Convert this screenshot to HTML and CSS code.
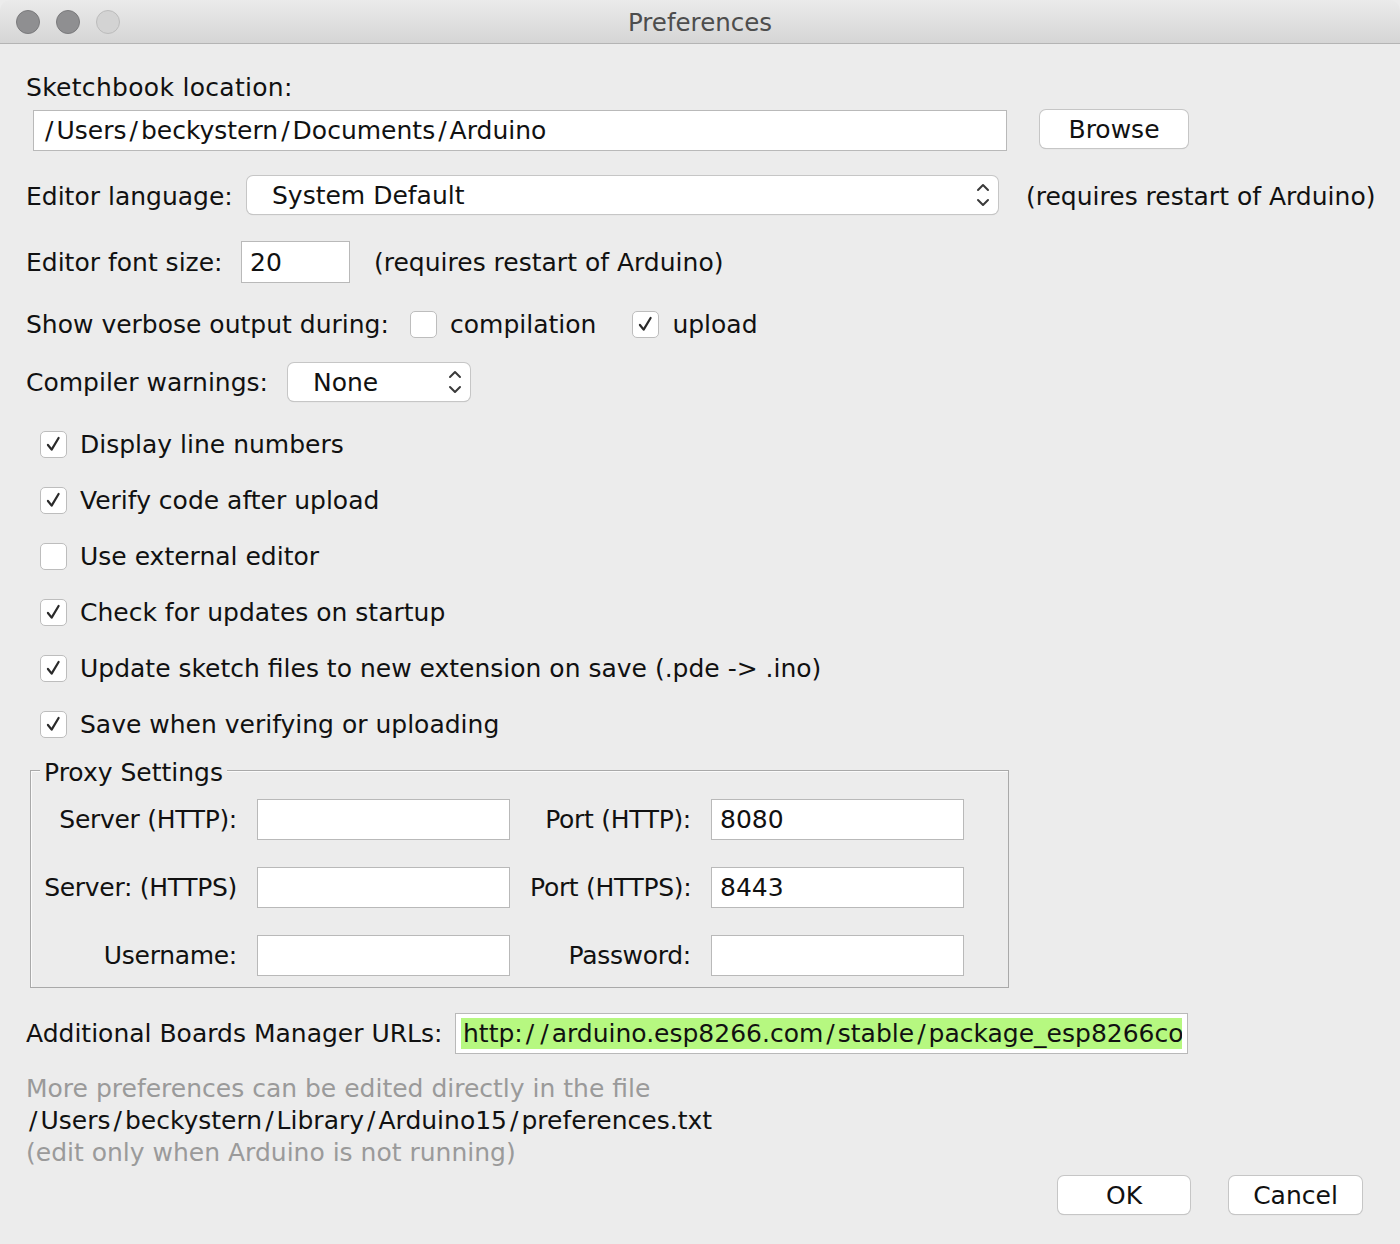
FILE: index.html
```html
<!DOCTYPE html>
<html>
<head>
<meta charset="utf-8">
<link rel="stylesheet" href="styles.css">
</head>
<body>
<div class="window">
  <div class="titlebar">
    <div class="lights">
      <span class="light dark"></span>
      <span class="light dark"></span>
      <span class="light pale"></span>
    </div>
    <div class="title">Preferences</div>
  </div>
  <div class="content">
    <div class="row r1">Sketchbook location:</div>
    <div class="row r2">
      <div class="field path"><span class="sl">/</span>Users<span class="sl">/</span>beckystern<span class="sl">/</span>Documents<span class="sl">/</span>Arduino</div>
      <div class="button browse">Browse</div>
    </div>
    <div class="row r3">
      <span class="label lab-lang">Editor language:</span>
      <div class="select lang"><span>System Default</span>
        <svg class="arrows" width="14" height="30" viewBox="0 0 14 30"><path d="M2 10 L7 5 L12 10 M2 20 L7 25 L12 20" fill="none" stroke="#3a3a3a" stroke-width="2" stroke-linecap="round" stroke-linejoin="round"/></svg>
      </div>
      <span class="note lang-note">(requires restart of Arduino)</span>
    </div>
    <div class="row r4">
      <span class="label lab-size">Editor font size:</span>
      <div class="field size">20</div>
      <span class="note size-note">(requires restart of Arduino)</span>
    </div>
    <div class="row r5">
      <span class="label lab-verbose">Show verbose output during:</span>
      <span class="check"></span><span class="cb-text comp-text">compilation</span>
      <span class="check checked"><svg viewBox="0 0 27 27"><path d="M7.5 14 L11.5 19 L19 6.5" fill="none" stroke="#2a2a2a" stroke-width="2.4" stroke-linecap="round" stroke-linejoin="round"/></svg></span><span class="cb-text">upload</span>
    </div>
    <div class="row r6">
      <span class="label lab-warn">Compiler warnings:</span>
      <div class="select warn"><span>None</span>
        <svg class="arrows" width="14" height="30" viewBox="0 0 14 30"><path d="M2 10 L7 5 L12 10 M2 20 L7 25 L12 20" fill="none" stroke="#3a3a3a" stroke-width="2" stroke-linecap="round" stroke-linejoin="round"/></svg>
      </div>
    </div>
    <div class="checks">
      <div class="crow"><span class="check checked"><svg viewBox="0 0 27 27"><path d="M7.5 14 L11.5 19 L19 6.5" fill="none" stroke="#2a2a2a" stroke-width="2.4" stroke-linecap="round" stroke-linejoin="round"/></svg></span><span class="cb-text">Display line numbers</span></div>
      <div class="crow"><span class="check checked"><svg viewBox="0 0 27 27"><path d="M7.5 14 L11.5 19 L19 6.5" fill="none" stroke="#2a2a2a" stroke-width="2.4" stroke-linecap="round" stroke-linejoin="round"/></svg></span><span class="cb-text">Verify code after upload</span></div>
      <div class="crow"><span class="check"></span><span class="cb-text">Use external editor</span></div>
      <div class="crow"><span class="check checked"><svg viewBox="0 0 27 27"><path d="M7.5 14 L11.5 19 L19 6.5" fill="none" stroke="#2a2a2a" stroke-width="2.4" stroke-linecap="round" stroke-linejoin="round"/></svg></span><span class="cb-text">Check for updates on startup</span></div>
      <div class="crow"><span class="check checked"><svg viewBox="0 0 27 27"><path d="M7.5 14 L11.5 19 L19 6.5" fill="none" stroke="#2a2a2a" stroke-width="2.4" stroke-linecap="round" stroke-linejoin="round"/></svg></span><span class="cb-text">Update sketch files to new extension on save (.pde -&gt; .ino)</span></div>
      <div class="crow"><span class="check checked"><svg viewBox="0 0 27 27"><path d="M7.5 14 L11.5 19 L19 6.5" fill="none" stroke="#2a2a2a" stroke-width="2.4" stroke-linecap="round" stroke-linejoin="round"/></svg></span><span class="cb-text">Save when verifying or uploading</span></div>
    </div>
    <div class="group">
      <span class="legend">Proxy Settings</span>
      <div class="proxy-grid">
        <span class="plabel">Server (HTTP):</span><div class="field pf"></div>
        <span class="plabel">Port (HTTP):</span><div class="field pf">8080</div>
        <span class="plabel">Server: (HTTPS)</span><div class="field pf"></div>
        <span class="plabel">Port (HTTPS):</span><div class="field pf">8443</div>
        <span class="plabel">Username:</span><div class="field pf"></div>
        <span class="plabel">Password:</span><div class="field pf"></div>
      </div>
    </div>
    <div class="row url-row">
      <span class="label lab-url">Additional Boards Manager URLs:</span>
      <div class="field url"><span class="hl">http:<span class="sl">/</span><span class="sl">/</span>arduino.esp8266.com<span class="sl">/</span>stable<span class="sl">/</span>package_esp8266com_index.json</span></div>
    </div>
    <div class="info">
      <div class="gray">More preferences can be edited directly in the file</div>
      <div><span class="sl">/</span>Users<span class="sl">/</span>beckystern<span class="sl">/</span>Library<span class="sl">/</span>Arduino15<span class="sl">/</span>preferences.txt</div>
      <div class="gray">(edit only when Arduino is not running)</div>
    </div>
    <div class="actions">
      <div class="button ok">OK</div>
      <div class="button cancel">Cancel</div>
    </div>
  </div>
</div>
</body>
</html>
```
FILE: styles.css
```css
html, body {
  margin: 0;
  padding: 0;
  background: #ececec;
}
body {
  width: 1400px;
  height: 1244px;
  overflow: hidden;
  font-family: "DejaVu Sans", "Liberation Sans", sans-serif;
  font-size: 25px;
  color: #111;
}
.window {
  width: 1400px;
  height: 1244px;
  background: #ececec;
}
.titlebar {
  height: 43px;
  border-bottom: 1px solid #b4b4b4;
  background: linear-gradient(#ebebeb, #d5d5d5);
  display: flex;
  align-items: center;
  border-radius: 10px 10px 0 0;
}
.lights {
  display: flex;
  gap: 16px;
  padding-left: 16px;
}
.light {
  width: 24px;
  height: 24px;
  border-radius: 50%;
  box-sizing: border-box;
}
.light.dark {
  background: #8f8f91;
  border: 1px solid #7a7a7c;
}
.light.pale {
  background: #d3d3d3;
  border: 1px solid #bcbcbc;
}
.title {
  flex: 1;
  text-align: center;
  margin-right: 120px;
  color: #4d4d4d;
  font-size: 24.5px;
  padding-top: 2px;
}
.content {
  padding: 22px 0 0 26px;
}
.sl {
  margin: 0 3px;
}
.row {
  display: flex;
  align-items: center;
  height: 44px;
}
.r1 {
  height: 42px;
  letter-spacing: 0.3px;
}
.r3 { margin-top: 22px; }
.r4 { margin-top: 22px; }
.r5 { margin-top: 18px; }
.r6 { margin-top: 14px; }
.label {
  flex: none;
  white-space: nowrap;
}
.lab-lang { width: 221px; }
.lab-size { width: 215px; }
.lab-verbose { width: 384px; }
.lab-warn { width: 262px; }
.lab-url { width: 429px; }
.field {
  background: #fff;
  border: 1px solid #b9b9b9;
  box-sizing: border-box;
  height: 41px;
  display: flex;
  align-items: center;
  padding-left: 8px;
  white-space: nowrap;
  overflow: hidden;
}
.path {
  margin-left: 7px;
  width: 974px;
}
.button {
  background: #fff;
  border-radius: 6px;
  box-shadow: 0 0 0 1px #c6c6c6, 0 1px 1px rgba(0,0,0,0.2);
  height: 38px;
  display: flex;
  align-items: center;
  justify-content: center;
  box-sizing: border-box;
}
.browse {
  margin-left: 33px;
  width: 148px;
  margin-top: -2px;
}
.select {
  background: #fff;
  border-radius: 6px;
  box-shadow: 0 0 0 1px #c6c6c6, 0 1px 1px rgba(0,0,0,0.2);
  height: 38px;
  display: flex;
  align-items: center;
  justify-content: space-between;
  box-sizing: border-box;
  padding: 0 8px 0 25px;
}
.lang {
  width: 751px;
  margin-top: -2px;
}
.lang-note { margin-left: 28px; }
.size {
  width: 109px;
  height: 42px;
}
.size-note { margin-left: 24px; }
.check {
  width: 27px;
  height: 27px;
  box-sizing: border-box;
  background: #fff;
  border: 1px solid #bdbdbd;
  border-radius: 5px;
  display: inline-block;
  flex: none;
}
.check svg {
  width: 25px;
  height: 25px;
  display: block;
}
.cb-text {
  margin-left: 13px;
  white-space: nowrap;
}
.comp-text { margin-right: 36px; }
.warn {
  width: 182px;
}
.checks {
  margin-top: 12px;
  padding-left: 14px;
}
.crow {
  height: 56px;
  display: flex;
  align-items: center;
}
.group {
  position: relative;
  margin: 18px 0 0 4px;
  width: 979px;
  box-sizing: border-box;
  border: 1px solid #a9a9a9;
  box-shadow: inset 1px 1px 0 #fafafa;
  padding: 28px 0 11px 0;
}
.legend {
  position: absolute;
  left: 9px;
  top: -14px;
  background: #ececec;
  padding: 0 4px;
  line-height: 32px;
}
.proxy-grid {
  display: grid;
  grid-template-columns: 206px 253px 161px 253px;
  grid-auto-rows: 41px;
  column-gap: 20px;
  row-gap: 27px;
  align-items: center;
}
.plabel {
  text-align: right;
  white-space: nowrap;
  letter-spacing: -0.3px;
}
.pf {
  height: 41px;
}
.url-row {
  margin-top: 25px;
  height: 41px;
}
.url {
  width: 733px;
  padding: 4px 5px;
  align-items: stretch;
}
.hl {
  background: #b6f880;
  display: flex;
  align-items: center;
  padding-left: 2px;
  overflow: hidden;
  width: 100%;
  white-space: nowrap;
}
.info {
  margin-top: 19px;
  line-height: 32px;
}
.gray { color: #9a9a9a; }
.actions {
  display: flex;
  justify-content: flex-end;
  gap: 39px;
  padding-right: 38px;
  margin-top: 7px;
}
.ok { width: 132px; }
.cancel { width: 133px; }
```
